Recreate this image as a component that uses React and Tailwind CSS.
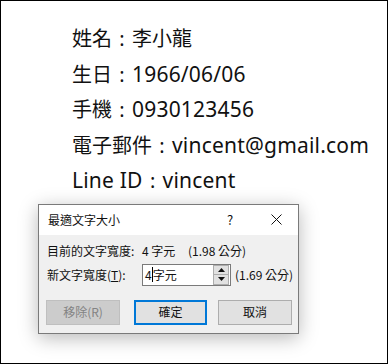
function Colon() {
  return <span className="inline-block w-[20px] text-center">:</span>;
}

function L({ children }) {
  return <span className="text-[21px] tracking-[0.2px]">{children}</span>;
}

export default function App() {
  const ui = { fontFamily: '"Noto Sans CJK TC", "Noto Sans", sans-serif' };
  const main = { fontFamily: '"Noto Sans", "Noto Sans CJK TC", sans-serif' };
  return (
    <div className="w-[388px] h-[364px] bg-white border border-black box-border overflow-hidden relative" style={ui}>
      <div className="pl-[71px] pt-[20px] text-[20px] leading-[35.5px] text-[#111]" style={main}>
        <div className="h-[35.5px]">姓名<Colon />李小龍</div>
        <div className="h-[35.5px]">生日<Colon /><L>1966/06/06</L></div>
        <div className="h-[35.5px]">手機<Colon /><L>0930123456</L></div>
        <div className="h-[35.5px]">電子郵件<Colon /><L>vincent@gmail.com</L></div>
        <div className="h-[35.5px]"><L>Line ID</L><Colon /><L>vincent</L></div>
      </div>
      <div className="ml-[37px] mt-[5px] w-[261px] h-[130px] border border-[#7a7a7a] bg-[#f0f0f0] shadow-[0_4px_18px_rgba(0,0,0,0.28)] text-[12px] text-[#111] flex flex-col">
        <div className="h-[30px] bg-white flex items-center pl-[9px] shrink-0">
          <span className="flex-1">最適文字大小</span>
          <span className="w-[44px] text-center text-[13px] mr-[2px]">?</span>
          <span className="w-[44px] flex justify-center items-center">
            <svg width="11" height="11" viewBox="0 0 11 11"><path d="M0.5 0.5 L10.5 10.5 M10.5 0.5 L0.5 10.5" stroke="#111" strokeWidth="1" /></svg>
          </span>
        </div>
        <div className="flex items-center h-[26px] mt-[3px] pl-[8px]">
          <span className="w-[95px]">目前的文字寬度:</span>
          <span className="w-[46px]">4 字元</span>
          <span>(1.98 公分)</span>
        </div>
        <div className="flex items-center h-[22px] pl-[8px]">
          <span className="w-[95px]">新文字寬度(<span className="underline">T</span>):</span>
          <div className="w-[89px] h-[22px] border border-[#7a7a7a] bg-white flex items-center box-border">
            <span className="pl-[2px]">4</span>
            <span className="w-px h-[15px] bg-black"></span>
            <span className="flex-1">字元</span>
            <div className="w-[16px] h-[20px] flex flex-col mr-[1px]">
              <div className="flex-1 bg-[#e1e1e1] border border-[#adadad] flex items-center justify-center">
                <svg width="7" height="4" viewBox="0 0 7 4"><path d="M3.5 0 L7 4 L0 4 Z" fill="#111" /></svg>
              </div>
              <div className="flex-1 bg-[#e1e1e1] border border-[#adadad] border-t-0 flex items-center justify-center">
                <svg width="7" height="4" viewBox="0 0 7 4"><path d="M0 0 L7 0 L3.5 4 Z" fill="#111" /></svg>
              </div>
            </div>
          </div>
          <span className="ml-[4px]">(1.69 公分)</span>
        </div>
        <div className="flex mt-[14px] pl-[7px] gap-[14px]">
          <div className="w-[74px] h-[25px] border border-[#bfbfbf] bg-[#cccccc] text-[#838383] flex items-center justify-center">移除(R)</div>
          <div className="w-[73px] h-[25px] border-2 border-[#0078d7] bg-[#e1e1e1] flex items-center justify-center">確定</div>
          <div className="w-[74px] h-[25px] border border-[#adadad] bg-[#e1e1e1] flex items-center justify-center ml-[-3px]">取消</div>
        </div>
      </div>
    </div>
  );
}
